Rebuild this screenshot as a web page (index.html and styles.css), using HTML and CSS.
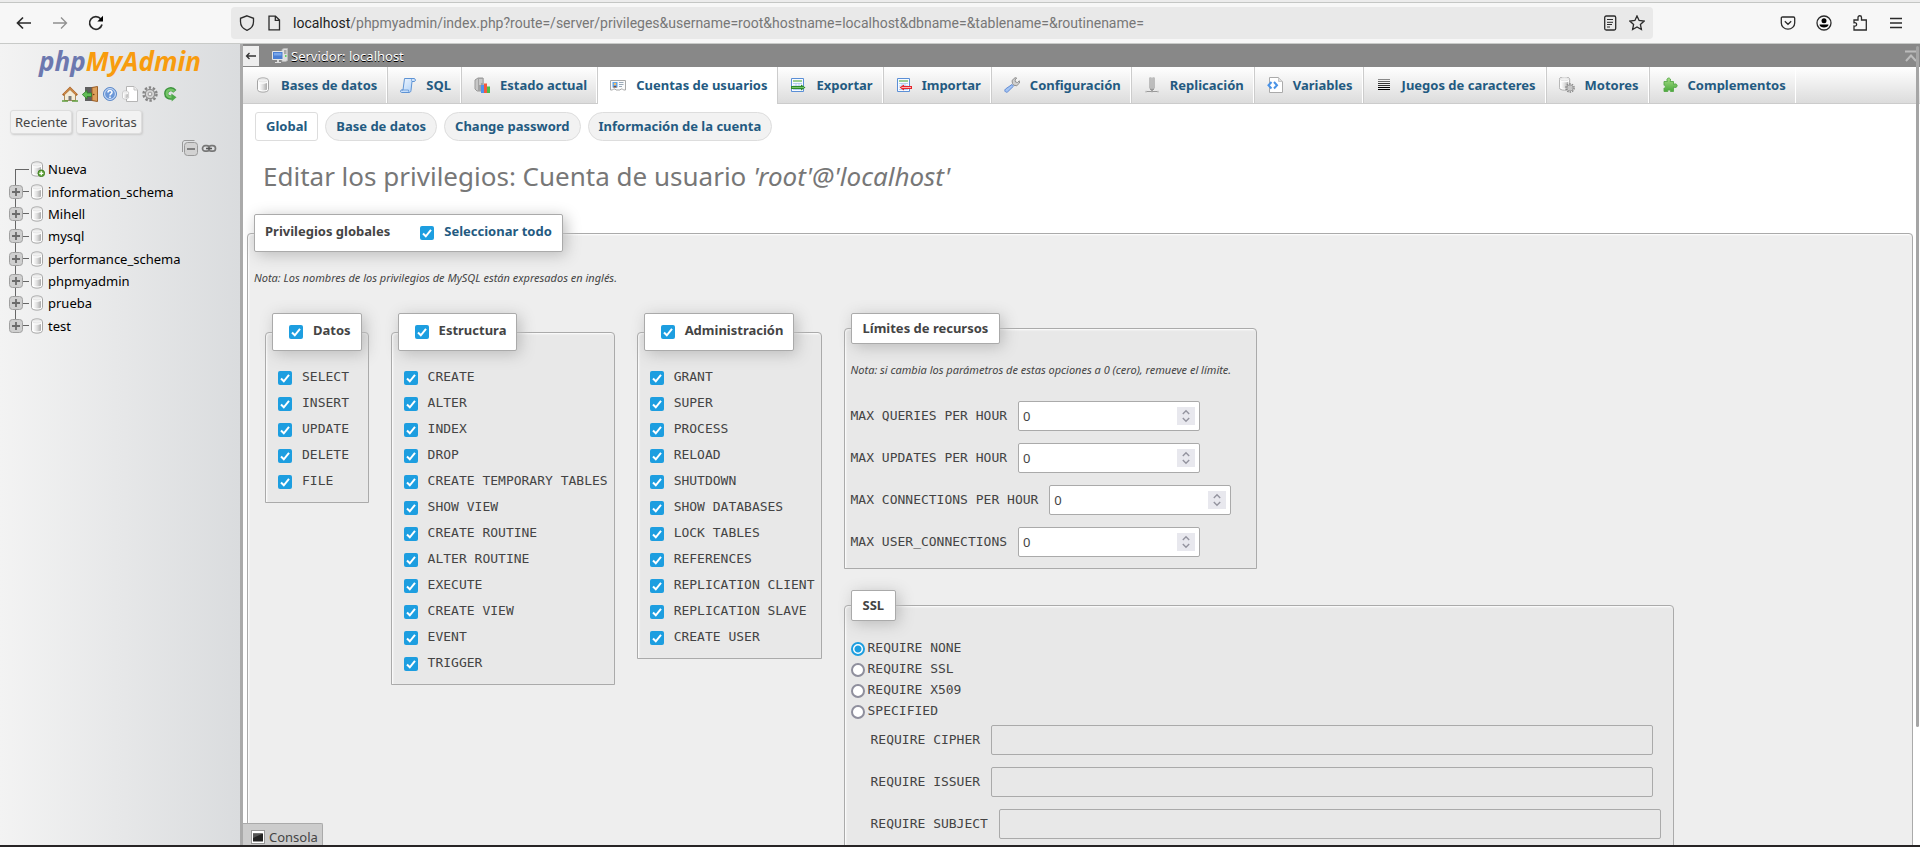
FILE: index.html
```html
<!DOCTYPE html>
<html lang="es">
<head>
<meta charset="utf-8">
<title>localhost | phpMyAdmin</title>
<link rel="stylesheet" href="styles.css">
</head>
<body>
<svg class="defs" aria-hidden="true">
  <defs>
    <linearGradient id="cyl" x1="0" x2="1" y1="0" y2="0"><stop offset="0" stop-color="#fff"/><stop offset=".5" stop-color="#dedede"/><stop offset="1" stop-color="#aaa"/></linearGradient>
    <linearGradient id="blue" x1="0" x2="1" y1="0" y2="1"><stop offset="0" stop-color="#f2f8ff"/><stop offset="1" stop-color="#a9cdf7"/></linearGradient>
    <linearGradient id="grn" x1="0" x2="0" y1="0" y2="1"><stop offset="0" stop-color="#a5dc85"/><stop offset="1" stop-color="#4aa83c"/></linearGradient>
  </defs>
  <symbol id="db" viewBox="0 0 16 16"><path d="M2.500 3.500C2.500 0 13.500 0 13.500 3.500v9c0 3.500-11 3.500-11 0z" fill="#fdfdfd" stroke="#a5a5a5"/><path d="M4 6c2 1 6 1 8 0v6.500c-2 1.200-6 1.200-8 0z" fill="url(#cyl)"/><ellipse cx="8" cy="3.500" rx="4.500" ry="1.600" fill="#f1f1f1" stroke="#d8d8d8" stroke-width=".6"/></symbol>
  <symbol id="sql" viewBox="0 0 16 16"><path d="M4.500 1.500h9.500c1.500 0 2 2.500.5 3H12l-1 9c-.2 1.300-.8 2-2 2H1.500c-1.300 0-1.300-2.500 0-2.500H3z" fill="url(#blue)" stroke="#5e93d4"/><path d="M12 4.500c-1-.8-.6-3 .6-3M1.500 13H8.500c0 1.500.3 2 .8 2" fill="none" stroke="#5e93d4" stroke-width=".8"/></symbol>
  <symbol id="status" viewBox="0 0 16 16"><path d="M1 3l3-2h5v13H3l-2-2z" fill="#c6c6c6" stroke="#999"/><path d="M4 1h5.500v13H4z" fill="#a2a2a2"/><path d="M5 3h3.500M5 5h3.500M5 7h2" stroke="#eee"/><path d="M7 8h3v8H7z" fill="#4e91ee"/><path d="M10 6.500h3V16h-3z" fill="#f4593d"/><path d="M13 9.500h3V16h-3z" fill="#4bbd49"/></symbol>
  <symbol id="users" viewBox="0 0 16 16"><path d="M.5 3.500h15v9.500h-2l-1-1h-1.500l-1 1h-4l-1-1H3.500l-1 1h-2z" fill="#fbfbfb" stroke="#a9a9a9"/><path d="M2.500 5h5v5.500h-5z" fill="#5ba3ee"/><circle cx="5" cy="7" r="1.300" fill="#f6bd69"/><path d="M3.300 10.500c0-2 3.400-2 3.400 0z" fill="#8a4a20"/><path d="M9 5.500h4.500M9 7.500h4.500M9 9.500h3" stroke="#9aa9b8"/></symbol>
  <symbol id="sheet" viewBox="0 0 16 16"><path d="M1.500 1.500h12v13h-12z" fill="#f6faff" stroke="#5b8fd6"/><path d="M3 4h9" stroke="#69b957" stroke-width="1.300"/><path d="M3 6.500h9M3 9h9M3 12.500h9M6 6v7M9 6v7" stroke="#a7c5ea" stroke-width=".8"/></symbol>
  <symbol id="export" viewBox="0 0 16 16"><use href="#sheet"/><path d="M1 9h10V7.500l4.500 3-4.500 3V12H1z" fill="#2e8b2a"/><path d="M2 10.500h12" stroke="#8ad67c" stroke-width=".8"/></symbol>
  <symbol id="import" viewBox="0 0 16 16"><use href="#sheet"/><path d="M16 9H8V7.500l-4.500 3 4.500 3V12h8z" fill="#e5262d"/><path d="M5.500 10.500H15" stroke="#ffb4b4"/></symbol>
  <symbol id="wrench" viewBox="0 0 16 16"><path d="M8.500 6.500L8 3.500 11 .7l1.700.3L11 3l.5 2 2 .5 1.800-1.700L15.500 6l-2.700 2.700-3-.4z" fill="#d0d0d0" stroke="#888" stroke-width=".9"/><path d="M8 7.500L1.500 12c-2 2 .8 4.500 2.500 2.500l5.500-5.300z" fill="#a3c4f3" stroke="#5681d0" stroke-width=".9"/></symbol>
  <symbol id="replica" viewBox="0 0 16 16"><path d="M6.500.5v11M9.500.5v11" stroke="#8a8a8a" stroke-width="2"/><path d="M6.500.5v11M9.500.5v11" stroke="#ddd" stroke-width=".6"/><path d="M6 12h4l-2 2zM2.500 14.500h11" fill="#888" stroke="#999"/><path d="M2 13.800v1.700M14 13.800v1.700M8 12.500v3" stroke="#aaa"/></symbol>
  <symbol id="vars" viewBox="0 0 16 16"><path d="M2.500.5h9l4 4v11h-13z" fill="#fff" stroke="#aaa"/><path d="M11.500.5v4h4" fill="#ddd" stroke="#bbb" stroke-width=".8"/><path d="M4.500 5L1.500 8.300l3 3.200M7 5l3 3.300-3 3.200" fill="none" stroke="#4a93e6" stroke-width="2"/></symbol>
  <symbol id="lines" viewBox="0 0 16 16"><path d="M2 2.500h12" stroke="#888"/><path d="M2 4.500h12" stroke="#666"/><path d="M2 6.500h12M2 8.500h12" stroke="#333"/><path d="M2 10.500h12M2 12.500h12" stroke="#000"/></symbol>
  <symbol id="cog" viewBox="0 0 16 16"><circle cx="8" cy="8" r="6.500" fill="none" stroke="#858585" stroke-width="2.400" stroke-dasharray="2.400 1.684"/><circle cx="8" cy="8" r="4.700" fill="#d4d4d4" stroke="#8e8e8e" stroke-width="1.200"/><circle cx="8" cy="8" r="1.900" fill="#eee" stroke="#999"/></symbol>
  <symbol id="engine" viewBox="0 0 16 16"><use href="#db" x="-2" y="-1" width="15" height="15"/><use href="#cog" x="6" y="6" width="10" height="10"/></symbol>
  <symbol id="plugin" viewBox="0 0 16 16"><path d="M5.500 4.500c-1.500-2 0-3.500 1.200-3.500s2.800 1.500 1.300 3.500h3.500V7.500c2-1.500 3.700 0 3.700 1.200s-1.700 2.700-3.700 1.300V14.500H8.500c.8-2-3.700-2-2.700 0H2v-3.500c1.800.8 1.800-3.500 0-2.700V4.500z" fill="url(#grn)" stroke="#58a84b" stroke-width=".9"/></symbol>
  <symbol id="server" viewBox="0 0 16 16"><path d="M10 1.500l2-1h3.500v12l-2 1H10z" fill="#ddd" stroke="#bbb" stroke-width=".8"/><path d="M12 3h2.500M12 5h2.500" stroke="#777"/><path d="M13 8h1.500" stroke="#3ad23a" stroke-width="1.500"/><path d="M.5 3.500h10.500v8H.5z" fill="#4a7fd4" stroke="#e5e5e5"/><path d="M2 5h7.500v2.500H2z" fill="#78a5ea"/><path d="M5 12h2v2h2v1H3v-1h2z" fill="#ddd"/></symbol>
  <symbol id="home" viewBox="0 0 16 16"><path d="M2.500 8.500L8 3.500l5.500 5V14.500h-11z" fill="#f4ecd8" stroke="#ac8d5d"/><path d="M.8 9.300L8 2l7.200 7.300" fill="none" stroke="#b06a2c" stroke-width="2.200"/><path d="M2 8.300L8 2.500l6 5.800" fill="none" stroke="#e8a864" stroke-width=".8"/><path d="M6.500 10h3v4.500h-3z" fill="#7a7a7a"/><path d="M0 15h6M10 15h6" stroke="#5f9d3d" stroke-width="1.600"/></symbol>
  <symbol id="exit" viewBox="0 0 16 16"><path d="M3 1h12v14H3z" fill="#5f5f5f"/><path d="M10 1.500L15.500.5v15l-5.500-1z" fill="#dca05c" stroke="#9b5f28"/><circle cx="11.700" cy="8.500" r=".8" fill="#6d3c12"/><path d="M.3 8.500L5 4.500V7h4.500v3.500H5V13z" fill="#62bd57" stroke="#2f8128" stroke-width=".8"/></symbol>
  <symbol id="doc" viewBox="0 0 16 16"><path d="M4.500.5h7.500l3.500 3.500v11.500h-11z" fill="#fff" stroke="#b5b5b5"/><path d="M12 .5v3.500h3.500" fill="#eee" stroke="#c5c5c5"/><use href="#db" x="-1" y="4" width="9" height="10"/></symbol>
  <symbol id="reload2" viewBox="0 0 16 16"><path d="M12.800 5.300C9.500 1.300 4.200 3.500 4.200 7.700c0 3 2.600 4.300 6.300 3.800" fill="none" stroke="#3b933c" stroke-width="4.200"/><path d="M12.300 5.200C9 2.300 4.700 4 4.700 7.700c0 2.600 2.300 3.800 5.800 3.600" fill="none" stroke="#74c567" stroke-width="2.400"/><path d="M9.300 7.500l5.200 3.700-4.800 4.300z" fill="#4fa94b"/></symbol>
  <symbol id="plus" viewBox="0 0 14 14"><rect x=".5" y=".5" width="13" height="13" rx="3" fill="#cfcfcf" stroke="#a0a0a0"/><path d="M3 7h8M7 3v8" stroke="#6b6b6b" stroke-width="1.800"/></symbol>
  <symbol id="up-down" viewBox="0 0 18 18"><path fill="#e8e8ee" d="M0 0h18v18H0z"/><path d="M5.800 7L9 3.800 12.200 7M5.800 11L9 14.200 12.200 11" fill="none" stroke="#94949f" stroke-width="1.400"/></symbol>
</svg>

<header class="browser">
  <div class="tabstrip"></div>
  <div class="toolbar">
    <div class="nav-buttons">
      <button class="ib" aria-label="Atrás"><svg viewBox="0 0 16 16"><path d="M15 8H1.800M7 2.500L1.500 8 7 13.500" class="ln thick"/></svg></button>
      <button class="ib faded" aria-label="Adelante"><svg viewBox="0 0 16 16"><path d="M1 8h13.200M9 2.500L14.500 8 9 13.500" class="ln"/></svg></button>
      <button class="ib" aria-label="Recargar"><svg viewBox="0 0 16 16"><path d="M14 9.500A6.300 6.300 0 1 1 12.800 4" class="ln thick"/><path d="M15 .8V6.500H9.300z"/></svg></button>
    </div>
    <div class="urlbar">
      <svg class="ic" viewBox="0 0 16 16"><path d="M8 .8l6.500 2.500v3.500c0 4-2.500 7-6.500 8.600-4-1.600-6.500-4.600-6.500-8.600V3.300z" class="ln"/></svg>
      <svg class="ic page" viewBox="0 0 16 16"><path d="M3 1.200h6.500L13.500 5v9.800H3zM9.300 1.200V5.300h4.200" class="ln"/></svg>
      <div class="url"><span>localhost</span>/phpmyadmin/index.php?route=/server/privileges&amp;username=root&amp;hostname=localhost&amp;dbname=&amp;tablename=&amp;routinename=</div>
      <svg class="ic" viewBox="0 0 16 16"><rect x="2.700" y="1" width="11" height="14" rx="1.500" class="ln"/><path d="M5 4.500h6M5 7.300h6M5 9.500h5M5 12h3" class="ln thin"/></svg>
      <svg class="ic" viewBox="0 0 16 16"><path d="M8 .9l2.100 4.600 5 .6-3.700 3.400 1 5L8 12l-4.400 2.500 1-5L.9 6.100l5-.6z" class="ln"/></svg>
    </div>
    <div class="tools">
      <button class="ib" aria-label="Pocket"><svg viewBox="0 0 16 16"><path d="M2.500 2h11c.7 0 1.200.4 1.200 1.200V8a6.700 6.200 0 0 1-13.400 0V3.200C1.300 2.400 1.800 2 2.500 2zM4.800 6.300L8 9.300l3.200-3" class="ln"/></svg></button>
      <button class="ib" aria-label="Cuenta"><svg viewBox="0 0 16 16"><circle cx="8" cy="8" r="7" class="ln"/><circle cx="8" cy="5.700" r="2.500"/><path d="M3.500 9.500h9c0 4-9 4-9 0z"/></svg></button>
      <button class="ib" aria-label="Extensiones"><svg viewBox="0 0 16 16"><path d="M2 15V11c3.500 1 3.500-4 0-3.200V5h4V2.500a1.700 1.700 0 0 1 3.500 0V5h4.800v10z" class="ln"/></svg></button>
      <button class="ib" aria-label="Menú"><svg viewBox="0 0 16 16"><path d="M2 3.500h12M2 8h12M2 12.500h12" class="ln"/></svg></button>
    </div>
  </div>
</header>

<div class="app">
  <aside class="sidebar">
    <a class="logo" href="#"><span>php</span>MyAdmin</a>
    <div class="side-icons">
      <a href="#" aria-label="Inicio"><svg><use href="#home"/></svg></a>
      <a href="#" aria-label="Salir"><svg><use href="#exit"/></svg></a>
      <a href="#" aria-label="Ayuda"><svg viewBox="0 0 16 16"><circle cx="8" cy="8" r="6.500" fill="#6c98d8" stroke="#5f8bc9"/><circle cx="8" cy="8" r="5.400" fill="none" stroke="#d5e4fa"/><path d="M6 6.500c0-2.500 4-2.500 4-.2C10 8 8 7.800 8 9.500M8 10.500v1.600" fill="none" stroke="#fff" stroke-width="1.500"/></svg></a>
      <a href="#" aria-label="Documentación"><svg><use href="#doc"/></svg></a>
      <a href="#" aria-label="Ajustes"><svg><use href="#cog"/></svg></a>
      <a href="#" aria-label="Recargar"><svg><use href="#reload2"/></svg></a>
    </div>
    <div class="side-buttons"><button>Reciente</button><button>Favoritas</button></div>
    <div class="tree-tools">
      <a href="#" aria-label="Contraer"><svg viewBox="0 0 16 16"><path d="M.5 12V3c0-1.500 1-2.500 2.500-2.500h9.500" fill="none" stroke="#999"/><rect x="2.500" y="2.500" width="13" height="13" rx="3" fill="#d2d2d2" stroke="#999"/><path d="M5 9h8" stroke="#777" stroke-width="1.800"/></svg></a>
      <a href="#" aria-label="Enlazar"><svg viewBox="0 0 16 16"><rect x="1.500" y="5.700" width="7" height="5.500" rx="2.700" fill="none" stroke="#777" stroke-width="1.700"/><rect x="7.500" y="5.700" width="7" height="5.500" rx="2.700" fill="none" stroke="#777" stroke-width="1.700"/><path d="M5 8.500h6" stroke="#555" stroke-width="1.500"/></svg></a>
    </div>
    <ul class="tree">
      <li class="new"><span class="node"></span><svg class="db" viewBox="0 0 16 16"><use href="#db"/><circle cx="12.300" cy="12.300" r="3.300" fill="#67a93f" stroke="#3f7f22"/><path d="M10.300 12.300h4M12.300 10.300v4" stroke="#fff" stroke-width="1.300"/></svg><a href="#">Nueva</a></li>
      <li><span class="node"><svg><use href="#plus"/></svg></span><svg class="db"><use href="#db"/></svg><a href="#">information_schema</a></li>
      <li><span class="node"><svg><use href="#plus"/></svg></span><svg class="db"><use href="#db"/></svg><a href="#">Mihell</a></li>
      <li><span class="node"><svg><use href="#plus"/></svg></span><svg class="db"><use href="#db"/></svg><a href="#">mysql</a></li>
      <li><span class="node"><svg><use href="#plus"/></svg></span><svg class="db"><use href="#db"/></svg><a href="#">performance_schema</a></li>
      <li><span class="node"><svg><use href="#plus"/></svg></span><svg class="db"><use href="#db"/></svg><a href="#">phpmyadmin</a></li>
      <li><span class="node"><svg><use href="#plus"/></svg></span><svg class="db"><use href="#db"/></svg><a href="#">prueba</a></li>
      <li><span class="node"><svg><use href="#plus"/></svg></span><svg class="db"><use href="#db"/></svg><a href="#">test</a></li>
    </ul>
  </aside>

  <main class="main">
    <div class="serverbar">
      <button class="collapse" aria-label="Ocultar panel"><svg viewBox="0 0 12 12"><path d="M11 6H1.500M4.500 3L1.500 6l3 3" fill="none" stroke="#333" stroke-width="1.300"/></svg></button>
      <svg class="srv"><use href="#server"/></svg>
      <a href="#">Servidor: localhost</a>
      <svg class="totop" viewBox="0 0 12 12"><path d="M0 1.500h12M1 11l5-5.500L11 11" fill="none" stroke="#bbb" stroke-width="2"/></svg>
    </div>
    <nav class="tabs">
      <a href="#"><svg><use href="#db"/></svg>Bases de datos</a>
      <a href="#"><svg><use href="#sql"/></svg>SQL</a>
      <a href="#"><svg><use href="#status"/></svg>Estado actual</a>
      <a href="#" class="active"><svg><use href="#users"/></svg>Cuentas de usuarios</a>
      <a href="#"><svg><use href="#export"/></svg>Exportar</a>
      <a href="#"><svg><use href="#import"/></svg>Importar</a>
      <a href="#"><svg><use href="#wrench"/></svg>Configuración</a>
      <a href="#"><svg><use href="#replica"/></svg>Replicación</a>
      <a href="#"><svg><use href="#vars"/></svg>Variables</a>
      <a href="#"><svg><use href="#lines"/></svg>Juegos de caracteres</a>
      <a href="#"><svg><use href="#engine"/></svg>Motores</a>
      <a href="#"><svg><use href="#plugin"/></svg>Complementos</a>
    </nav>
    <div class="page-body">
      <nav class="pills">
        <a href="#" class="current">Global</a>
        <a href="#">Base de datos</a>
        <a href="#">Change password</a>
        <a href="#">Información de la cuenta</a>
      </nav>
      <h2>Editar los privilegios: Cuenta de usuario <em>'root'@'localhost'</em></h2>
      <fieldset class="global">
        <legend class="tall">Privilegios globales <input type="checkbox" id="all" checked><label for="all" class="all">Seleccionar todo</label></legend>
        <p class="note">Nota: Los nombres de los privilegios de MySQL están expresados en inglés.</p>
        <div class="groups">
          <fieldset>
            <legend class="tall"><input type="checkbox" id="g1" checked><label for="g1">Datos</label></legend>
            <div class="privs">
              <label><input type="checkbox" checked>SELECT</label>
              <label><input type="checkbox" checked>INSERT</label>
              <label><input type="checkbox" checked>UPDATE</label>
              <label><input type="checkbox" checked>DELETE</label>
              <label><input type="checkbox" checked>FILE</label>
            </div>
          </fieldset>
          <fieldset>
            <legend class="tall"><input type="checkbox" id="g2" checked><label for="g2">Estructura</label></legend>
            <div class="privs">
              <label><input type="checkbox" checked>CREATE</label>
              <label><input type="checkbox" checked>ALTER</label>
              <label><input type="checkbox" checked>INDEX</label>
              <label><input type="checkbox" checked>DROP</label>
              <label><input type="checkbox" checked>CREATE TEMPORARY TABLES</label>
              <label><input type="checkbox" checked>SHOW VIEW</label>
              <label><input type="checkbox" checked>CREATE ROUTINE</label>
              <label><input type="checkbox" checked>ALTER ROUTINE</label>
              <label><input type="checkbox" checked>EXECUTE</label>
              <label><input type="checkbox" checked>CREATE VIEW</label>
              <label><input type="checkbox" checked>EVENT</label>
              <label><input type="checkbox" checked>TRIGGER</label>
            </div>
          </fieldset>
          <fieldset>
            <legend class="tall"><input type="checkbox" id="g3" checked><label for="g3">Administración</label></legend>
            <div class="privs">
              <label><input type="checkbox" checked>GRANT</label>
              <label><input type="checkbox" checked>SUPER</label>
              <label><input type="checkbox" checked>PROCESS</label>
              <label><input type="checkbox" checked>RELOAD</label>
              <label><input type="checkbox" checked>SHUTDOWN</label>
              <label><input type="checkbox" checked>SHOW DATABASES</label>
              <label><input type="checkbox" checked>LOCK TABLES</label>
              <label><input type="checkbox" checked>REFERENCES</label>
              <label><input type="checkbox" checked>REPLICATION CLIENT</label>
              <label><input type="checkbox" checked>REPLICATION SLAVE</label>
              <label><input type="checkbox" checked>CREATE USER</label>
            </div>
          </fieldset>
          <div class="right">
            <fieldset class="resources">
              <legend>Límites de recursos</legend>
              <p class="note">Nota: si cambia los parámetros de estas opciones a 0 (cero), remueve el límite.</p>
              <div class="limits">
                <div class="field"><label for="m1">MAX QUERIES PER HOUR</label><span class="num"><input type="number" id="m1" value="0"><svg><use href="#up-down"/></svg></span></div>
                <div class="field"><label for="m2">MAX UPDATES PER HOUR</label><span class="num"><input type="number" id="m2" value="0"><svg><use href="#up-down"/></svg></span></div>
                <div class="field"><label for="m3">MAX CONNECTIONS PER HOUR</label><span class="num"><input type="number" id="m3" value="0"><svg><use href="#up-down"/></svg></span></div>
                <div class="field"><label for="m4">MAX USER_CONNECTIONS</label><span class="num"><input type="number" id="m4" value="0"><svg><use href="#up-down"/></svg></span></div>
              </div>
            </fieldset>
            <fieldset>
              <legend>SSL</legend>
              <div class="radios">
                <label><input type="radio" name="ssl" checked>REQUIRE NONE</label>
                <label><input type="radio" name="ssl">REQUIRE SSL</label>
                <label><input type="radio" name="ssl">REQUIRE X509</label>
                <label><input type="radio" name="ssl">SPECIFIED</label>
              </div>
              <div class="ssl-fields">
                <div class="field"><label for="s1">REQUIRE CIPHER</label><input type="text" id="s1" disabled></div>
                <div class="field"><label for="s2">REQUIRE ISSUER</label><input type="text" id="s2" disabled></div>
                <div class="field"><label for="s3">REQUIRE SUBJECT</label><input type="text" id="s3" disabled></div>
              </div>
            </fieldset>
          </div>
        </div>
      </fieldset>
    </div>
    <button class="console"><svg viewBox="0 0 14 14"><rect x=".5" y=".5" width="13" height="13" fill="#fff" stroke="#999"/><path d="M2 3.500h10v8H2z" fill="#222"/><path d="M2 3.500h10L2 8z" fill="#555"/></svg>Consola</button>
    <div class="scrollthumb"></div>
  </main>
</div>
<footer class="dock"></footer>
</body>
</html>
```
FILE: styles.css
```css
* { box-sizing: border-box; }

body {
  margin: 0;
  height: 100vh;
  display: flex;
  flex-direction: column;
  overflow: hidden;
  background: #fff;
  color: #444;
  font: 13px/18px "Noto Sans", sans-serif;
}

a { color: #235a81; text-decoration: none; }
button { font: inherit; color: inherit; }
svg { display: block; width: 16px; height: 16px; flex: none; }
.defs { position: absolute; width: 0; height: 0; }

/* Browser chrome */
.browser { flex: none; background: #f7f7f7; border-bottom: 1px solid #c8cac8; }
.tabstrip { height: 3px; background: #ececec; border-bottom: 1px solid #c4c6c4; }
.toolbar { display: flex; align-items: center; height: 40px; padding: 0 16px; }
.ib { padding: 0; border: 0; background: none; }
.ln { fill: none; stroke: #2b2b2b; stroke-width: 1.3; }
.thick { stroke-width: 1.7; }
.thin { stroke-width: 1; }
.faded { opacity: 0.5; }
.nav-buttons { display: flex; gap: 20px; width: 215px; }
.urlbar {
  flex: 1;
  display: flex;
  align-items: center;
  height: 32px;
  padding: 0 8px;
  gap: 11px;
  border-radius: 4px;
  background: #e9e9e9;
}
.url { flex: 1; color: #777; font-family: Roboto, sans-serif; font-size: 14px; line-height: 20px; white-space: nowrap; overflow: hidden; }
.url span { color: #222; }
.tools { display: flex; gap: 20px; padding-left: 127px; }

.app { flex: 1; min-height: 0; display: flex; }
.dock { flex: none; height: 2px; background: #272425; }

/* Navigation panel */
.sidebar {
  flex: none;
  width: 243px;
  border-right: 3px solid #aaa;
  background: linear-gradient(to right, #f3f3f3, #dadcde);
}
.logo {
  display: block;
  text-align: center;
  font: italic bold 26px/34px "Noto Sans", sans-serif;
  color: #f89c0e;
}
.logo span { color: #6c78af; }
.side-icons { display: flex; justify-content: center; gap: 4px; margin-top: 8px; }
.side-buttons { display: flex; gap: 4px; padding: 0 10px; margin-top: 8px; }
.side-buttons button {
  height: 24px;
  padding: 0 4px;
  border: 1px solid #ddd;
  border-radius: 3px;
  background: #f2f2f2;
  box-shadow: 1px 1px 2px #ccc;
}
.tree-tools { display: flex; gap: 3px; justify-content: flex-end; margin: 6px 23px 2px 0; }
.tree { display: grid; grid-auto-rows: 1fr; height: 179px; margin: 0; padding: 0 0 0 9px; list-style: none; }
.tree li { display: flex; align-items: center; }
.tree a { color: #000; margin-left: 5px; }
.node {
  display: flex;
  align-items: center;
  align-self: stretch;
  width: 20px;
  background:
    linear-gradient(#666, #666) 6px 0 / 1px 100% no-repeat,
    linear-gradient(#666, #666) 6px 50% / 14px 1px no-repeat;
}
.new .node {
  background:
    linear-gradient(#666, #666) 6px 100% / 1px 50% no-repeat,
    linear-gradient(#666, #666) 6px 50% / 14px 1px no-repeat;
}
.tree li:last-child .node {
  background:
    linear-gradient(#666, #666) 6px 0 / 1px 50% no-repeat,
    linear-gradient(#666, #666) 6px 50% / 14px 1px no-repeat;
}
.node svg { width: 14px; height: 14px; }
.tree .db { width: 16px; margin-right: -2px; }

/* Main panel */
.main { position: relative; flex: 1; min-width: 0; overflow: hidden; }
.serverbar { display: flex; align-items: center; height: 23px; background: #888; }
.serverbar a { flex: 1; margin-left: 3px; color: #fff; text-shadow: 0 1px 0 #000; }
.srv { margin-left: 13px; }
.collapse { width: 16px; height: 20px; padding: 0 2px; border: 0; background: #eee; }
.collapse svg, .totop { width: 12px; height: 12px; }
.totop { margin-right: 3px; }

.tabs {
  display: flex;
  height: 37px;
  border-bottom: 1px solid #ccc;
  background: linear-gradient(#fff, #dcdcdc);
}
.tabs a {
  display: flex;
  align-items: center;
  gap: 10px;
  padding: 0 9px 0 12px;
  border-left: 1px solid #ccc;
  border-right: 1px solid #fff;
  font-weight: bold;
  white-space: nowrap;
}
.tabs a:first-child { border-left: 0; }
.tabs .active { background: #fff; margin-bottom: -1px; padding-bottom: 1px; }

.page-body { padding: 8px 7px 0 4px; }
.pills { display: flex; gap: 7px; padding-left: 8px; }
.pills a {
  padding: 0 10px;
  border: 1px solid #ddd;
  border-radius: 15px;
  background: #f2f2f2;
  font-weight: bold;
  line-height: 27px;
}
.pills .current { border-radius: 3px; background: #fff; }
h2 { margin: 17px 0 20px 16px; font-size: 26px; line-height: 36px; font-weight: normal; color: #777; }

/* Fieldsets */
fieldset {
  min-width: 0;
  margin: 0;
  padding: 0 6px 8px;
  border: 1px solid #aaa;
  border-radius: 4px 4px 0 0;
  background: #e8e8e8;
  box-shadow: inset 1px 1px 2px #fff;
}
legend {
  display: flex;
  align-items: center;
  padding: 0 11px;
  border: 1px solid #aaa;
  border-radius: 2px;
  background: #fff;
  box-shadow: 3px 3px 15px #bbb;
  font-weight: bold;
  line-height: 29px;
}
.tall { padding: 0 10px 3px; line-height: 33px; }
.tall input { margin: 3px 10px 0 6px; }
.global { background: #eee; }
.global > legend input { margin-left: 30px; }
.all { color: #235a81; }
.note { margin: 17px 0 0; font-size: 11px; font-style: italic; white-space: nowrap; }
.groups { display: flex; align-items: flex-start; gap: 22px; margin: 26px 0 0 11px; }

input[type="checkbox"], input[type="radio"] { appearance: none; flex: none; width: 14px; height: 14px; }
input[type="checkbox"] {
  border-radius: 2px;
  background: #1d9ee0 url("data:image/svg+xml,%3Csvg xmlns='http://www.w3.org/2000/svg' viewBox='0 0 14 14'%3E%3Cpath d='M3 7.500L5.800 10.300 11 3.800' fill='none' stroke='white' stroke-width='2'/%3E%3C/svg%3E");
}
input[type="radio"] { margin: 2px 3px 0 0; border: 2px solid #8f8f9d; border-radius: 50%; background: #fff; }
input[type="radio"]:checked { border-color: #1d9ee0; background: radial-gradient(circle, #1d9ee0 3px, #fff 4px); }

.privs, .radios, .field { font-family: "DejaVu Sans Mono", monospace; }
.privs { margin-top: 13px; }
.privs label { display: flex; align-items: center; height: 26px; white-space: nowrap; }
.privs input { margin: 2px 10px 0 6px; }

.right { display: flex; flex-direction: column; align-items: flex-start; gap: 21px; }
.resources { min-width: 413px; }
.limits { display: flex; flex-direction: column; gap: 12px; margin: 22px 0 3px; }
.field { display: flex; align-items: center; gap: 11px; white-space: nowrap; }
.field input {
  height: 30px;
  padding: 0 4px;
  border: 1px solid #aaa;
  border-radius: 2px;
  background: #fff;
  color: #444;
  font: 13px "Noto Sans", sans-serif;
}
.num { position: relative; }
.num input { display: block; width: 182px; appearance: textfield; }
.num input::-webkit-inner-spin-button { appearance: none; margin: 0; }
.num svg { position: absolute; right: 5px; top: 6px; width: 18px; height: 18px; }
.radios { margin-top: 16px; }
.radios label { display: flex; align-items: center; height: 21px; }
.ssl-fields { display: flex; flex-direction: column; gap: 12px; margin: 4px 6px 20px 20px; }
.ssl-fields input { width: 662px; background: #e8e8e8; }

/* Overlays */
.console {
  position: absolute;
  left: 0;
  bottom: 0;
  display: flex;
  align-items: center;
  gap: 4px;
  height: 22px;
  padding: 5px 4px 0 8px;
  border: 1px solid #aaa;
  border-width: 1px 1px 0 0;
  border-radius: 0 2px 0 0;
  background: #ccc;
}
.console svg { width: 14px; height: 14px; }
.scrollthumb { position: absolute; top: 2px; right: 1px; width: 3px; height: 85%; border-radius: 2px; background: #a5a5a5; }
```
